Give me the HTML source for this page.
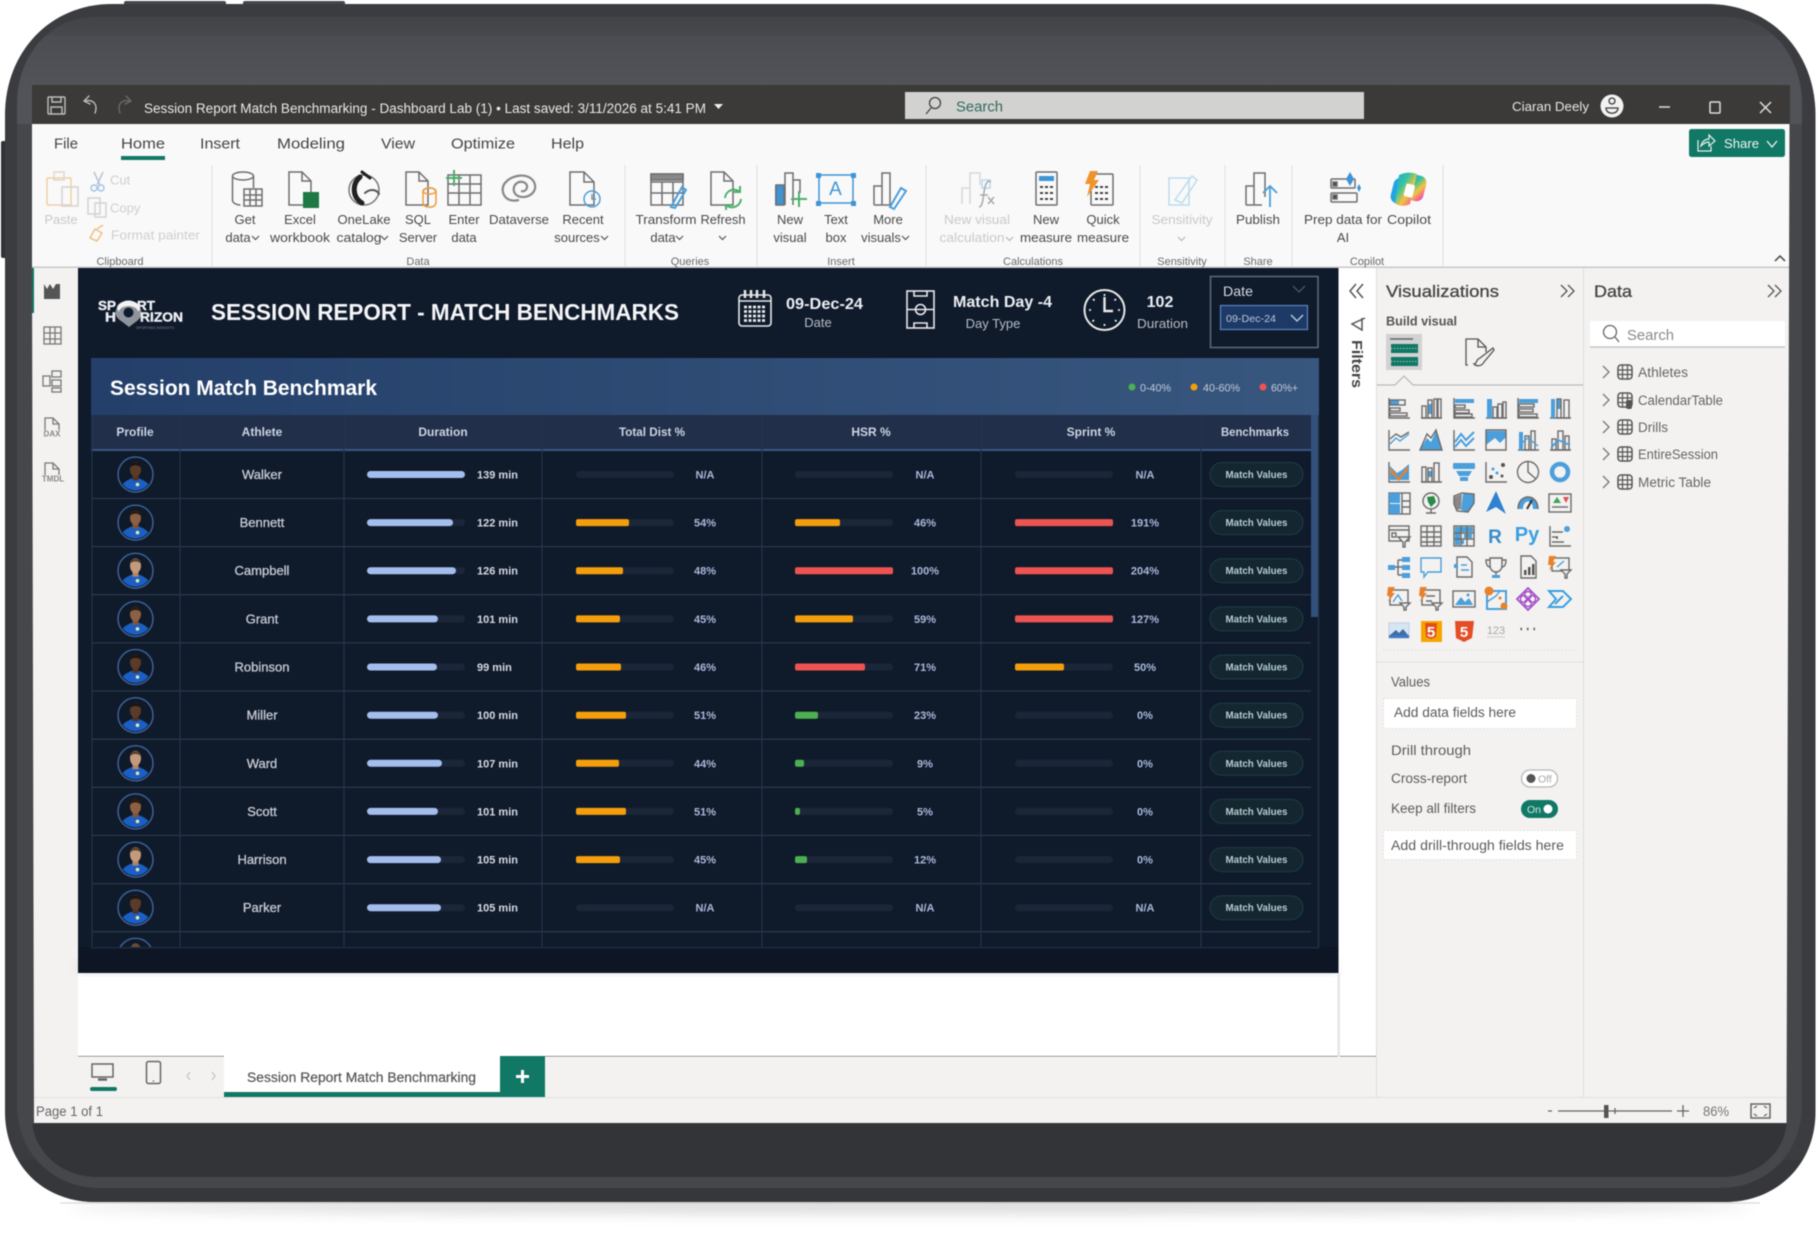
<!DOCTYPE html>
<html lang="en"><head><meta charset="utf-8"><title>Session Report Match Benchmarking</title>
<style>
html,body{margin:0;padding:0;background:#fff;width:1819px;height:1241px;overflow:hidden}
svg{display:block;filter:blur(.55px)}
text{font-family:"Liberation Sans",Arial,sans-serif}
.r{font-size:13px;fill:#4a4a4a;text-anchor:middle}
.d{font-size:13px;fill:#c9c9c9;text-anchor:middle}
.gl{font-size:11px;fill:#6a6a6a;text-anchor:middle}
.m{font-size:15px;fill:#444}
.h{font-size:12px;font-weight:bold;fill:#cdd4e2;text-anchor:middle}
.n{font-size:13px;fill:#c8ccd4;stroke:#c8ccd4;stroke-width:.3;text-anchor:middle}
.v{font-size:11px;font-weight:bold;fill:#d6dbe4}
.p{font-size:11px;font-weight:bold;fill:#aab9da;text-anchor:middle}
.b{font-size:10.5px;font-weight:bold;fill:#b4ced2;text-anchor:middle}
.w{fill:#fff;font-weight:bold}
.s{font-size:13.5px;fill:#5c5c5c}
.i path,.i rect,.i circle,.i ellipse,.i line{stroke:#6b6b6b;stroke-width:1.4;fill:none}
.i .f{fill:#4a9fdc;stroke:none}
.i .bl{stroke:#4a9fdc}
.i .o{fill:#e8812a;stroke:none}
.i .k{fill:#555;stroke:none}
.l path,.l rect,.l circle,.l ellipse{stroke:#6f6f6f;stroke-width:1.5;fill:none}
.l .bs{stroke:#4a9fdc}
.l .gs{stroke:#4caf6a}
.l .os{stroke:#ee9a3e}
.l .fb{fill:#3f94d6;stroke:none}
.l .fg{fill:#1d7a44;stroke:none}
.l .fo{fill:#f0932b;stroke:none}
.c path,.c rect,.c circle,.c ellipse{stroke:#d3d3d3;stroke-width:1.5;fill:none}
.track{fill:#1b2738}
.du{fill:#a3bdec}.or{fill:#f59e0b}.rd{fill:#ef5350}.gr{fill:#4caf50}
</style></head><body>
<svg xmlns="http://www.w3.org/2000/svg" width="1819" height="1241" viewBox="0 0 1819 1241">
<defs>
<linearGradient id="hdr" x1="0" x2="1" y1="0" y2="0"><stop offset="0" stop-color="#24406a"/><stop offset="1" stop-color="#38577f"/></linearGradient>
<linearGradient id="top" x1="0" x2="0" y1="17" y2="85" gradientUnits="userSpaceOnUse"><stop offset="0" stop-color="#434448"/><stop offset=".25" stop-color="#47484c"/><stop offset=".3" stop-color="#4c4d52"/><stop offset="1" stop-color="#525358"/></linearGradient>
<linearGradient id="cop" x1="0" x2="1" y1="0" y2="1"><stop offset="0" stop-color="#1fa5e0"/><stop offset=".35" stop-color="#35c4a0"/><stop offset=".6" stop-color="#f5c43c"/><stop offset=".85" stop-color="#f0609a"/><stop offset="1" stop-color="#b04ad0"/></linearGradient>
<filter id="sh" x="-10%" y="-300%" width="120%" height="700%"><feGaussianBlur stdDeviation="7"/></filter>
<filter id="cs" x="-5%" y="-20%" width="110%" height="140%"><feGaussianBlur stdDeviation="5"/></filter>
<clipPath id="avc"><circle cx="0" cy="0" r="16"/></clipPath>
<clipPath id="tb"><rect x="90" y="415" width="1230" height="532"/></clipPath>
<g id="j"><path d="M-17 18C-15 9-9 6-4 4L4 4C9 6 15 9 17 18Z" fill="#1b5fc4"/><circle cx="2" cy="10" r="1.800" fill="#e7e2b0"/></g>
<g id="rowbase">
<rect class="track" x="367" y="-3.5" width="98" height="7" rx="3.5"/>
<rect class="track" x="576" y="-3.5" width="98" height="7" rx="3.5"/>
<rect class="track" x="795" y="-3.5" width="98" height="7" rx="3.5"/>
<rect class="track" x="1015" y="-3.5" width="98" height="7" rx="3.5"/>
<rect x="1210" y="-12" width="93" height="24" rx="12" fill="#14262f" stroke="#1f3d47"/>
<text class="b" x="1256.5" y="3.5" textLength="62" lengthAdjust="spacingAndGlyphs">Match Values</text>
<path d="M92 24H1311" stroke="#28384e" stroke-width="1.3"/>
<circle cx="135.5" cy="0" r="17.5" fill="#0e1a2a" stroke="#3e6098" stroke-width="1.5"/>
</g>
<g id="av1"><g clip-path="url(#avc)"><use href="#j"/><rect x="-3" y="0" width="6" height="6" fill="#4f3324"/><ellipse cx="0" cy="-5" rx="5.500" ry="7.500" fill="#5b3a28"/><path d="M-5.500-7C-5-14 5-14 5.500-7C3-10-3-10-5.500-7Z" fill="#1c1410"/></g></g>
<g id="av2"><g clip-path="url(#avc)"><use href="#j"/><rect x="-3" y="0" width="6" height="6" fill="#b08468"/><ellipse cx="0" cy="-5" rx="5.500" ry="7.500" fill="#c59a7c"/><path d="M-5.500-7C-5-14 5-14 5.500-7C3-10-3-10-5.500-7Z" fill="#5a4330"/></g></g>
<g id="av3"><g clip-path="url(#avc)"><use href="#j"/><rect x="-3" y="0" width="6" height="6" fill="#7d533a"/><ellipse cx="0" cy="-5" rx="5.500" ry="7.500" fill="#8d6044"/><path d="M-6-6C-6-15 6-15 6-6C3-10-3-10-6-6Z" fill="#2a1d14"/></g></g>
<path id="chv" d="M0 0l3.500 3.500L7 0" fill="none" stroke="#555" stroke-width="1.2"/>
<g id="tbi"><rect x="-7" y="-7" width="14" height="14" rx="3" fill="none" stroke="#555" stroke-width="1.500"/><path d="M-7-2H7M-7 2.500H7M-2.500-7V7M2.500-7V7" stroke="#555" stroke-width="1.200"/></g>
</defs>

<!-- frame -->
<ellipse cx="910" cy="1206" rx="840" ry="6" fill="#777" opacity=".35" filter="url(#sh)"/>
<path d="M60 1203H1760" stroke="#999" stroke-width="1.500" opacity=".3"/>
<rect x="124" y="1" width="102" height="8" rx="2" fill="#46474b"/>
<rect x="243" y="1" width="102" height="8" rx="2" fill="#46474b"/>
<rect x="1" y="141" width="8" height="117" rx="2" fill="#323337"/>
<path id="outer" d="M112 4H1708C1771 4 1815.500 52 1815.500 115V1112C1815.500 1165 1776 1202 1725 1202H95C45 1202 5 1165 5 1112V115C5 52 50 4 112 4Z" fill="#3b3c40"/>
<path d="M95 1202C60 1202 32 1185 18 1160H1802C1788 1185 1760 1202 1725 1202Z" fill="#36373b"/>
<path d="M95 17H1725C1770 17 1802 55 1802 105V1105C1802 1150 1770 1188 1720 1188H100C50 1188 17 1150 17 1105V105C17 55 50 17 95 17Z" fill="#46474b"/>
<path d="M95 17H1725C1770 17 1802 55 1802 105V124H17V105C17 55 50 17 95 17Z" fill="url(#top)"/>
<path d="M32 1100H1787V1118C1787 1150 1760 1177 1722 1177H97C60 1177 32 1150 32 1118Z" fill="#333438"/>
<rect x="32" y="85" width="1758" height="39" fill="#3b3a39"/>

<!-- title bar -->
<g fill="none" stroke="#bdbdbd" stroke-width="1.400">
<rect x="48" y="97" width="17" height="17" rx="1"/><path d="M52 97v5h9v-5M51 114v-7h11v7"/>
<path d="M84 101l5-5M84 101l6 3M85 101c9-2 13 4 10 12" stroke-linecap="round"/>
<path d="M131 101l-5-5M131 101l-6 3M130 101c-9-2-13 4-10 12" stroke="#6a6a6a" stroke-linecap="round"/>
</g>
<text x="144" y="113" font-size="13.500" fill="#e8e8e8" textLength="562" lengthAdjust="spacingAndGlyphs">Session Report Match Benchmarking - Dashboard Lab (1) • Last saved: 3/11/2026 at 5:41 PM</text>
<path d="M714 104h9l-4.500 5z" fill="#eee"/>
<rect x="905" y="92" width="459" height="27" fill="#d2d2d0"/>
<circle cx="935" cy="103" r="5.500" fill="none" stroke="#444" stroke-width="1.300"/><path d="M931 108l-5 6" stroke="#444" stroke-width="1.300"/>
<text x="956" y="111.500" font-size="15" fill="#33695c" textLength="47" lengthAdjust="spacingAndGlyphs">Search</text>
<text x="1512" y="111" font-size="13" fill="#e6e6e6" textLength="77" lengthAdjust="spacingAndGlyphs">Ciaran Deely</text>
<circle cx="1612" cy="106" r="11.500" fill="#f2f2f2"/><circle cx="1612" cy="101" r="3" fill="none" stroke="#3b3a39" stroke-width="1.300"/><path d="M1606 108h12c0 7-12 7-12 0z" fill="none" stroke="#3b3a39" stroke-width="1.300"/>
<path d="M1659 107h11" stroke="#ddd" stroke-width="1.500"/><rect x="1710" y="102" width="10" height="11" rx="1" fill="none" stroke="#ddd" stroke-width="1.500"/><path d="M1760 102l11 11M1771 102l-11 11" stroke="#ddd" stroke-width="1.500"/>

<!-- ribbon -->
<rect x="32" y="124" width="1758" height="144" fill="#f9f9f9"/>
<rect x="32" y="266.500" width="1758" height="2" fill="#c8c8c8"/>
<text class="m" x="54" y="148.500" textLength="24" lengthAdjust="spacingAndGlyphs">File</text>
<text class="m" x="121" y="148.500" textLength="44" lengthAdjust="spacingAndGlyphs">Home</text>
<text class="m" x="200" y="148.500" textLength="40" lengthAdjust="spacingAndGlyphs">Insert</text>
<text class="m" x="277" y="148.500" textLength="68" lengthAdjust="spacingAndGlyphs">Modeling</text>
<text class="m" x="381" y="148.500" textLength="34" lengthAdjust="spacingAndGlyphs">View</text>
<text class="m" x="451" y="148.500" textLength="64" lengthAdjust="spacingAndGlyphs">Optimize</text>
<text class="m" x="551" y="148.500" textLength="33" lengthAdjust="spacingAndGlyphs">Help</text>
<rect x="121" y="156" width="44" height="4" fill="#117865"/>
<rect x="1689" y="129" width="96" height="28" rx="2.500" fill="#117865"/>
<path d="M1698 140v11h13v-5M1701 146c1-5 5-7 8-7v-4l6 6-6 5v-4c-3 0-5 1-8 4z" fill="none" stroke="#e8f2ef" stroke-width="1.200"/>
<text x="1724" y="148" font-size="13" fill="#eef6f3" textLength="35" lengthAdjust="spacingAndGlyphs">Share</text>
<path d="M1767 141l5 6 5-6" fill="none" stroke="#eef6f3" stroke-width="1.300"/>
<g stroke="#e2e2e2" stroke-width="1.200"><path d="M212 165V266M625 165V266M757 165V266M926 165V266M1140 165V266M1225 165V266M1292 165V266M1443 165V266"/></g>
<text class="gl" x="120" y="265">Clipboard</text><text class="gl" x="418" y="265">Data</text><text class="gl" x="690" y="265">Queries</text><text class="gl" x="841" y="265">Insert</text><text class="gl" x="1033" y="265">Calculations</text><text class="gl" x="1182" y="265">Sensitivity</text><text class="gl" x="1258" y="265">Share</text><text class="gl" x="1367" y="265">Copilot</text>
<path d="M1775 261l5-5 5 5" fill="none" stroke="#444" stroke-width="1.500"/>

<text class="d" x="61" y="224">Paste</text>
<text x="110" y="184.500" font-size="13" fill="#cfcfcf">Cut</text>
<text x="110" y="212.500" font-size="13" fill="#cfcfcf">Copy</text>
<text x="111" y="239.500" font-size="13" fill="#cfcfcf" textLength="89" lengthAdjust="spacingAndGlyphs">Format painter</text>
<g class="c">
<rect x="47" y="178" width="24" height="27" rx="1" style="stroke:#f0d0a8"/><rect x="54" y="172" width="10" height="8" style="stroke:#e0d8cc"/><rect x="62" y="187" width="16" height="19" fill="#fff"/>
<path d="M94 172l6 13M103 172l-6 13" style="stroke:#b8c4d8"/><circle cx="94" cy="188" r="3" style="stroke:#a5c4e6"/><circle cx="101" cy="188" r="3" style="stroke:#a5c4e6"/>
<rect x="88" y="198" width="12" height="16"/><rect x="95" y="203" width="11" height="14"/>
<path d="M90 238l5-9 7 4-5 8zM97 229l6-4" style="stroke:#f0c088"/>
</g>

<g class="l">
<!-- get data -->
<ellipse cx="243" cy="176" rx="10.500" ry="4"/><path d="M232.500 176V200c0 3 4 5 8 5M253.500 176V188"/><rect x="244" y="189" width="18" height="17" fill="#f9f9f9"/><path d="M244 195h18M244 200h18M250 189v17M256 189v17"/>
<!-- excel -->
<path d="M289 172H302L311 181V205H289ZM302 172V181H311"/><rect class="fg" x="303" y="192" width="16" height="16"/>
<!-- sql -->
<path d="M406 172H419L428 181V205H406ZM419 172V181H428"/><rect class="os" x="423" y="188" width="13" height="19" rx="5" fill="#f9f9f9"/><ellipse class="os" cx="429.500" cy="191" rx="6.500" ry="3"/>
<!-- enter -->
<path d="M448 175H481V205H448ZM448 184H481M448 193H481M459 175V205M470 175V205"/><path class="gs" d="M454 170V186M446 178H462" style="stroke-width:2"/>
<!-- dataverse -->
<path d="M519 200C503 204 499 188 506 182C512 175 528 172 534 182C539 192 527 200 518 196C510 192 514 180 523 182C530 184 527 193 521 191" style="stroke-width:2.200;stroke:#888"/>
<!-- recent -->
<path d="M570 172H584L594 182V205H570ZM584 172V182H594"/><circle class="bs" cx="592" cy="199" r="8" fill="#f9f9f9"/><path class="bs" d="M592 194V199H596"/>
<!-- transform -->
<path d="M651 174H683V205H651ZM651 182H683M651 193H683M662 182V205M673 182V205"/><path d="M651 174H683V180H651Z" style="fill:#888"/><path class="bs" d="M671 207L682 187L686 190L675 208Z" fill="#f9f9f9" style="stroke-width:2"/>
<!-- refresh -->
<path d="M711 172H724L733 181V205H711ZM724 172V181H733"/><path class="gs" d="M725 198a9 9 0 0 1 15-6M741 199a9 9 0 0 1-15 6M740 186v6h-6M726 210v-5h6" style="stroke-width:2" fill="none"/>
<!-- new visual -->
<rect class="fb" x="775" y="185" width="9" height="20"/><rect x="776" y="185" width="8" height="20"/><path d="M785 205V173H793V205M793 180H800V193"/><path class="gs" d="M799 191V207M791 199H807" style="stroke-width:2"/>
<!-- text box -->
<rect x="819" y="175" width="34" height="28" style="stroke:#3f94d6"/><rect class="fb" x="816" y="173" width="5" height="5"/><rect class="fb" x="851" y="173" width="5" height="5"/><rect class="fb" x="816" y="201" width="5" height="5"/><rect class="fb" x="851" y="201" width="5" height="5"/>
<!-- more visuals -->
<path d="M874 205V186H882V205M882 205V173H890V205H874"/><path class="bs" d="M890 207L901 188L906 191L894 209Z" style="stroke-width:2"/>
<!-- measure -->
<rect x="1036" y="172" width="21" height="33" rx="1"/><rect class="fb" x="1039" y="176" width="15" height="5"/><path d="M1040 187h3M1045 187h3M1050 187h3M1040 193h3M1045 193h3M1050 193h3M1040 199h3M1045 199h3M1050 199h3" style="stroke-width:2;stroke:#444"/>
<!-- quick measure -->
<rect x="1091" y="174" width="22" height="31" rx="1"/><path d="M1095 187h3M1100 187h3M1105 187h3M1095 193h3M1100 193h3M1105 193h3M1095 199h3M1100 199h3M1105 199h3" style="stroke-width:2;stroke:#444"/><path class="fo" d="M1090 171H1098L1094 180H1099L1087 197L1090 184H1085Z"/>
<!-- publish -->
<path d="M1246 205V186H1254V205M1254 205V173H1265V197M1246 205H1262"/><path class="bs" d="M1270 207V186M1263 193L1270 186L1277 193" style="stroke-width:1.800"/>
<!-- prep -->
<rect x="1331" y="179" width="24" height="9" rx="1"/><rect x="1331" y="193" width="26" height="9" rx="1"/><rect x="1333" y="182" width="4" height="4" style="fill:#444"/><rect x="1333" y="195" width="4" height="4" style="fill:#444"/><path class="fb" d="M1350 172L1354 179L1350 186L1346 179Z"/><path class="fb" d="M1359 184L1361 188L1359 192L1357 188Z"/>
</g>
<!-- onelake -->
<g fill="none" stroke-linecap="round">
<circle cx="364" cy="190" r="15" stroke="#777" stroke-width="1.500"/>
<path d="M360 177C352 184 352 197 362 203" stroke="#222" stroke-width="5"/>
<path d="M362 172L370 178" stroke="#222" stroke-width="3"/>
<path d="M365 193C371 188 377 190 379 194" stroke="#555" stroke-width="2"/>
</g>
<text x="835.500" y="195" font-size="19" fill="#3f94d6" text-anchor="middle">A</text>
<!-- calc light -->
<g class="c"><path d="M962 204V188H970V204M970 204V173H980V185" style="stroke:#d8d8d8"/><rect x="982" y="180" width="8" height="8" style="stroke:#b9d8ee"/><path d="M979 207C984 207 983 190 986 184C988 180 990 181 991 182M980 195H988M988 197l6 7M994 197l-6 7" style="stroke:#aaa"/></g>
<g fill="none" stroke="#bcdcf0" stroke-width="1.500"><path d="M1169 178H1189V205H1169Z"/><path d="M1175 200L1192 176L1197 180L1182 203Z"/></g>
<rect x="1392" y="178" width="17" height="26" rx="7" fill="#22a5e5" transform="rotate(14 1400 191)"/>
<rect x="1408" y="175" width="17" height="26" rx="7" fill="url(#cop)" transform="rotate(14 1416 188)"/>
<path d="M1399 175C1405 172 1411 172 1417 174L1410 204C1404 207 1398 206 1395 203Z" fill="url(#cop)"/>
<rect x="1405" y="184" width="9" height="13" rx="2" fill="#fff" transform="rotate(14 1409 190)"/>

<text class="r" x="245" y="224">Get</text><text class="r" x="238" y="242">data</text><use href="#chv" x="252" y="236"/>
<text class="r" x="300" y="224">Excel</text><text class="r" x="300" y="242" textLength="60" lengthAdjust="spacingAndGlyphs">workbook</text>
<text class="r" x="364" y="224" textLength="53" lengthAdjust="spacingAndGlyphs">OneLake</text><text class="r" x="359" y="242" textLength="45" lengthAdjust="spacingAndGlyphs">catalog</text><use href="#chv" x="381" y="236"/>
<text class="r" x="418" y="224">SQL</text><text class="r" x="418" y="242">Server</text>
<text class="r" x="464" y="224">Enter</text><text class="r" x="464" y="242">data</text>
<text class="r" x="519" y="224" textLength="60" lengthAdjust="spacingAndGlyphs">Dataverse</text>
<text class="r" x="583" y="224">Recent</text><text class="r" x="577" y="242">sources</text><use href="#chv" x="601" y="236"/>
<text class="r" x="666" y="224" textLength="61" lengthAdjust="spacingAndGlyphs">Transform</text><text class="r" x="663" y="242">data</text><use href="#chv" x="676" y="236"/>
<text class="r" x="723" y="224" textLength="45" lengthAdjust="spacingAndGlyphs">Refresh</text><use href="#chv" x="719" y="236"/>
<text class="r" x="790" y="224">New</text><text class="r" x="790" y="242">visual</text>
<text class="r" x="836" y="224">Text</text><text class="r" x="836" y="242">box</text>
<text class="r" x="888" y="224">More</text><text class="r" x="881" y="242">visuals</text><use href="#chv" x="902" y="236"/>
<text class="d" x="977" y="224" textLength="66" lengthAdjust="spacingAndGlyphs">New visual</text><text class="d" x="972" y="242" textLength="65" lengthAdjust="spacingAndGlyphs">calculation</text><use href="#chv" x="1006" y="237" opacity=".4"/>
<text class="r" x="1046" y="224">New</text><text class="r" x="1046" y="242" textLength="52" lengthAdjust="spacingAndGlyphs">measure</text>
<text class="r" x="1103" y="224">Quick</text><text class="r" x="1103" y="242" textLength="52" lengthAdjust="spacingAndGlyphs">measure</text>
<text class="d" x="1182" y="224" textLength="61" lengthAdjust="spacingAndGlyphs">Sensitivity</text><use href="#chv" x="1178" y="237" opacity=".4"/>
<text class="r" x="1258" y="224" textLength="44" lengthAdjust="spacingAndGlyphs">Publish</text>
<text class="r" x="1343" y="224" textLength="78" lengthAdjust="spacingAndGlyphs">Prep data for</text><text class="r" x="1343" y="242">AI</text>
<text class="r" x="1409" y="224" textLength="44" lengthAdjust="spacingAndGlyphs">Copilot</text>

<!-- left nav -->
<rect x="32" y="268" width="46" height="854" fill="#f3f2f1"/>
<rect x="32" y="268" width="2" height="45" fill="#117865"/>
<path d="M44 299V284L47 289L50 284L53 289L56 284L60 284V299Z" fill="#555"/>
<g fill="none" stroke="#777" stroke-width="1.300"><rect x="44" y="327" width="17" height="17"/><path d="M44 333h17M44 339h17M50 327v17M55 327v17"/>
<rect x="52" y="371" width="9" height="6"/><rect x="52" y="380" width="9" height="6"/><rect x="52" y="388" width="9" height="4"/><rect x="43" y="376" width="7" height="10"/>
<path d="M45 430V418h8l6 6v6M53 418v6h6"/><path d="M45 475V463h8l6 6v6M53 463v6h6"/></g>
<text x="52" y="436.500" font-size="8" font-weight="bold" fill="#888" text-anchor="middle">DAX</text><text x="53" y="481.500" font-size="8" font-weight="bold" fill="#888" text-anchor="middle">TMDL</text>

<!-- canvas -->
<rect x="78" y="268" width="1298" height="788" fill="#fff"/>
<rect x="78" y="960" width="1258" height="14" fill="#999" opacity=".22" filter="url(#cs)"/>
<rect x="78" y="268" width="1260.500" height="705" fill="#0f1a2b"/>
<rect x="78" y="947" width="1260.500" height="26" fill="#0e1625"/>
<rect x="1337.500" y="973" width="2.500" height="83.500" fill="#e6e6e6"/>
<!-- logo -->
<path d="M115.500 313a13 12 0 0 1 26 0c0 4-3 7-6 9l-6.500 5-6.500-5c-3-2-7-5-7-9z" fill="#8f949c"/>
<path d="M117 310a11.500 9.500 0 0 1 23 0a11.500 4 0 0 0-23 0z" fill="#f2f2f2"/>
<path d="M117 308a11.500 7 0 0 1 23 0l-2 4a9.500 6 0 0 0-19 0z" fill="#f2f2f2"/>
<circle cx="128.500" cy="312.500" r="5" fill="#0f1a2b"/>
<text x="98" y="310" font-size="13" font-weight="bold" fill="#eceef2" stroke="#eceef2" stroke-width=".4" textLength="18" lengthAdjust="spacingAndGlyphs">SP</text>
<text x="137" y="310" font-size="13" font-weight="bold" fill="#eceef2" stroke="#eceef2" stroke-width=".4" textLength="18" lengthAdjust="spacingAndGlyphs">RT</text>
<text x="105" y="321.500" font-size="13" font-weight="bold" fill="#eceef2" stroke="#eceef2" stroke-width=".4" textLength="11" lengthAdjust="spacingAndGlyphs">H</text>
<text x="140" y="321.500" font-size="13" font-weight="bold" fill="#eceef2" stroke="#eceef2" stroke-width=".4" textLength="43" lengthAdjust="spacingAndGlyphs">RIZON</text>
<text x="136" y="329" font-size="4" fill="#7c8290" textLength="38" lengthAdjust="spacingAndGlyphs">SPORTING INSIGHTS</text>
<text x="211" y="320" font-size="23" font-weight="bold" fill="#f4f5f7" textLength="468" lengthAdjust="spacingAndGlyphs">SESSION REPORT - MATCH BENCHMARKS</text>
<!-- kpis -->
<g fill="none" stroke="#e8e8e8" stroke-width="1.600">
<rect x="739" y="295" width="32" height="31" rx="3"/><path d="M739 301H771"/><path d="M745 290v8M751 290v8M757 290v8M764 290v8" stroke-width="2.500"/>
<path d="M744 307h22M744 311.500h22M744 316h22M744 320.500h22" stroke-width="2.800" stroke-dasharray="3 1.500"/>
<rect x="907" y="291" width="27" height="37"/><path d="M907 309.500h27M914 291v5h13v-5M914 328v-5h13v5"/><circle cx="920.500" cy="309.500" r="5"/>
<circle cx="1104.500" cy="310" r="20" stroke-width="2"/><path d="M1104.500 297V311H1113" stroke-width="2.400"/>
<path d="M1104.500 294v2M1104.500 324v2M1089 310h2M1118 310h2M1093 299l1.500 1.500M1115 320l1.500 1.500M1116 299l-1.500 1.500M1094 320l-1.500 1.500" stroke-width="1.800"/>
</g>
<text x="786" y="309" font-size="16" class="w" textLength="77" lengthAdjust="spacingAndGlyphs" style="fill:#eceef2">09-Dec-24</text>
<text x="818" y="327" font-size="13" fill="#b9bec7" text-anchor="middle">Date</text>
<text x="953" y="307" font-size="16" class="w" textLength="99" lengthAdjust="spacingAndGlyphs" style="fill:#eceef2">Match Day -4</text>
<text x="993" y="328" font-size="13" fill="#b9bec7" text-anchor="middle">Day Type</text>
<text x="1160" y="307" font-size="16" class="w" text-anchor="middle" style="fill:#eceef2">102</text>
<text x="1137" y="328" font-size="13" fill="#b9bec7" textLength="51" lengthAdjust="spacingAndGlyphs">Duration</text>
<rect x="1210.500" y="276.500" width="107.500" height="71" fill="none" stroke="#5f6b7c" stroke-width="1.500"/>
<text x="1223" y="296" font-size="14" fill="#d5d8de" textLength="30" lengthAdjust="spacingAndGlyphs">Date</text>
<path d="M1293 286l6 6 6-6" fill="none" stroke="#4a5566" stroke-width="1.300"/>
<rect x="1220.500" y="305.500" width="87" height="24" fill="#1d3a66" stroke="#5b84c0" stroke-width="1.200"/>
<text x="1226" y="322" font-size="10.500" fill="#bcc6d6" textLength="50" lengthAdjust="spacingAndGlyphs">09-Dec-24</text>
<path d="M1291 315l6 6 6-6" fill="none" stroke="#c9d3e3" stroke-width="1.300"/>

<!-- table -->
<rect x="91" y="358" width="1228" height="57" fill="url(#hdr)"/>
<text x="110" y="395" font-size="21" class="w" textLength="267" lengthAdjust="spacingAndGlyphs">Session Match Benchmark</text>
<circle cx="1132" cy="387" r="3.500" fill="#4caf50"/><text x="1140" y="391.500" font-size="11" fill="#c1cad8" textLength="31" lengthAdjust="spacingAndGlyphs">0-40%</text>
<circle cx="1194" cy="387" r="3.500" fill="#f59e0b"/><text x="1203" y="391.500" font-size="11" fill="#c1cad8" textLength="37" lengthAdjust="spacingAndGlyphs">40-60%</text>
<circle cx="1263" cy="387" r="3.500" fill="#ef5350"/><text x="1271" y="391.500" font-size="11" fill="#c1cad8" textLength="27" lengthAdjust="spacingAndGlyphs">60%+</text>
<rect x="91" y="415" width="1220" height="35" fill="#222f4a"/>
<rect x="91" y="449" width="1220" height="2" fill="#3a5786"/>
<text class="h" x="135" y="436">Profile</text><text class="h" x="262" y="436">Athlete</text><text class="h" x="443" y="436">Duration</text><text class="h" x="652" y="436" textLength="66" lengthAdjust="spacingAndGlyphs">Total Dist %</text><text class="h" x="871" y="436">HSR %</text><text class="h" x="1091" y="436">Sprint %</text><text class="h" x="1255" y="436" textLength="68" lengthAdjust="spacingAndGlyphs">Benchmarks</text>

<g clip-path="url(#tb)">
<g transform="translate(0,474.500)"><use href="#rowbase"/><use href="#av1" x="135.500"/><text class="n" x="262" y="4.500">Walker</text><rect class="du" x="367" y="-3.500" width="98" height="7" rx="3.500"/><text class="v" x="477" y="4">139 min</text><text class="p" x="705" y="4">N/A</text><text class="p" x="925" y="4">N/A</text><text class="p" x="1145" y="4">N/A</text></g>
<g transform="translate(0,522.600)"><use href="#rowbase"/><use href="#av3" x="135.500"/><text class="n" x="262" y="4.500">Bennett</text><rect class="du" x="367" y="-3.500" width="86" height="7" rx="3.500"/><text class="v" x="477" y="4">122 min</text><rect class="or" x="576" y="-3.500" width="53" height="7" rx="2"/><text class="p" x="705" y="4">54%</text><rect class="or" x="795" y="-3.500" width="45" height="7" rx="2"/><text class="p" x="925" y="4">46%</text><rect class="rd" x="1015" y="-3.500" width="98" height="7" rx="2"/><text class="p" x="1145" y="4">191%</text></g>
<g transform="translate(0,570.700)"><use href="#rowbase"/><use href="#av2" x="135.500"/><text class="n" x="262" y="4.500">Campbell</text><rect class="du" x="367" y="-3.500" width="89" height="7" rx="3.500"/><text class="v" x="477" y="4">126 min</text><rect class="or" x="576" y="-3.500" width="47" height="7" rx="2"/><text class="p" x="705" y="4">48%</text><rect class="rd" x="795" y="-3.500" width="98" height="7" rx="2"/><text class="p" x="925" y="4">100%</text><rect class="rd" x="1015" y="-3.500" width="98" height="7" rx="2"/><text class="p" x="1145" y="4">204%</text></g>
<g transform="translate(0,618.900)"><use href="#rowbase"/><use href="#av3" x="135.500"/><text class="n" x="262" y="4.500">Grant</text><rect class="du" x="367" y="-3.500" width="71" height="7" rx="3.500"/><text class="v" x="477" y="4">101 min</text><rect class="or" x="576" y="-3.500" width="44" height="7" rx="2"/><text class="p" x="705" y="4">45%</text><rect class="or" x="795" y="-3.500" width="58" height="7" rx="2"/><text class="p" x="925" y="4">59%</text><rect class="rd" x="1015" y="-3.500" width="98" height="7" rx="2"/><text class="p" x="1145" y="4">127%</text></g>
<g transform="translate(0,667)"><use href="#rowbase"/><use href="#av1" x="135.500"/><text class="n" x="262" y="4.500">Robinson</text><rect class="du" x="367" y="-3.500" width="70" height="7" rx="3.500"/><text class="v" x="477" y="4">99 min</text><rect class="or" x="576" y="-3.500" width="45" height="7" rx="2"/><text class="p" x="705" y="4">46%</text><rect class="rd" x="795" y="-3.500" width="70" height="7" rx="2"/><text class="p" x="925" y="4">71%</text><rect class="or" x="1015" y="-3.500" width="49" height="7" rx="2"/><text class="p" x="1145" y="4">50%</text></g>
<g transform="translate(0,715.200)"><use href="#rowbase"/><use href="#av1" x="135.500"/><text class="n" x="262" y="4.500">Miller</text><rect class="du" x="367" y="-3.500" width="71" height="7" rx="3.500"/><text class="v" x="477" y="4">100 min</text><rect class="or" x="576" y="-3.500" width="50" height="7" rx="2"/><text class="p" x="705" y="4">51%</text><rect class="gr" x="795" y="-3.500" width="23" height="7" rx="2"/><text class="p" x="925" y="4">23%</text><text class="p" x="1145" y="4">0%</text></g>
<g transform="translate(0,763.300)"><use href="#rowbase"/><use href="#av2" x="135.500"/><text class="n" x="262" y="4.500">Ward</text><rect class="du" x="367" y="-3.500" width="75" height="7" rx="3.500"/><text class="v" x="477" y="4">107 min</text><rect class="or" x="576" y="-3.500" width="43" height="7" rx="2"/><text class="p" x="705" y="4">44%</text><rect class="gr" x="795" y="-3.500" width="9" height="7" rx="2"/><text class="p" x="925" y="4">9%</text><text class="p" x="1145" y="4">0%</text></g>
<g transform="translate(0,811.400)"><use href="#rowbase"/><use href="#av3" x="135.500"/><text class="n" x="262" y="4.500">Scott</text><rect class="du" x="367" y="-3.500" width="71" height="7" rx="3.500"/><text class="v" x="477" y="4">101 min</text><rect class="or" x="576" y="-3.500" width="50" height="7" rx="2"/><text class="p" x="705" y="4">51%</text><rect class="gr" x="795" y="-3.500" width="5" height="7" rx="2"/><text class="p" x="925" y="4">5%</text><text class="p" x="1145" y="4">0%</text></g>
<g transform="translate(0,859.600)"><use href="#rowbase"/><use href="#av2" x="135.500"/><text class="n" x="262" y="4.500">Harrison</text><rect class="du" x="367" y="-3.500" width="74" height="7" rx="3.500"/><text class="v" x="477" y="4">105 min</text><rect class="or" x="576" y="-3.500" width="44" height="7" rx="2"/><text class="p" x="705" y="4">45%</text><rect class="gr" x="795" y="-3.500" width="12" height="7" rx="2"/><text class="p" x="925" y="4">12%</text><text class="p" x="1145" y="4">0%</text></g>
<g transform="translate(0,907.700)"><use href="#rowbase"/><use href="#av1" x="135.500"/><text class="n" x="262" y="4.500">Parker</text><rect class="du" x="367" y="-3.500" width="74" height="7" rx="3.500"/><text class="v" x="477" y="4">105 min</text><text class="p" x="705" y="4">N/A</text><text class="p" x="925" y="4">N/A</text><text class="p" x="1145" y="4">N/A</text></g>
<g transform="translate(0,955.800)"><circle cx="135.500" cy="0" r="17.500" fill="#0e1a2a" stroke="#3e6098" stroke-width="1.500"/><ellipse cx="135.500" cy="-5" rx="5.500" ry="7.500" fill="#6b4a36"/></g>
</g>
<rect x="91" y="947" width="1228" height="1.500" fill="#1d2a3e"/>
<g stroke="#243349" stroke-width="1.300"><path d="M92 415V947M180 415V947M344 415V947M542 415V947M762 415V947M981 415V947M1201 415V947"/></g>
<path d="M1318.500 415V947" stroke="#243349" stroke-width="1.300"/>
<rect x="1311" y="415" width="7" height="202" fill="#33507a"/>

<!-- filters pane -->
<path d="M1356 284l-6 7 6 7M1363 284l-6 7 6 7" fill="none" stroke="#555" stroke-width="1.500"/>
<path d="M1365 318L1352 324L1362 330V318" fill="none" stroke="#555" stroke-width="1.500"/>
<text transform="translate(1352,340) rotate(90)" font-size="15" font-weight="bold" fill="#444" textLength="48" lengthAdjust="spacingAndGlyphs">Filters</text>

<!-- viz & data panes -->
<rect x="1376" y="268" width="414" height="854" fill="#f3f2f1"/>
<path d="M1376.500 268V1097M1583.500 268V1097" stroke="#e0dedc" stroke-width="1"/>
<text x="1386" y="297" font-size="17" fill="#444" textLength="113" lengthAdjust="spacingAndGlyphs" style="stroke:#444;stroke-width:.3">Visualizations</text>
<path d="M1561 285l6 6-6 6M1568 285l6 6-6 6M1768 285l6 6-6 6M1775 285l6 6-6 6" fill="none" stroke="#555" stroke-width="1.300"/>
<text x="1594" y="297" font-size="17" fill="#444" style="stroke:#444;stroke-width:.3" textLength="38" lengthAdjust="spacingAndGlyphs">Data</text>
<text x="1386" y="325.500" font-size="12.500" font-weight="bold" fill="#555" textLength="71" lengthAdjust="spacingAndGlyphs">Build visual</text>
<rect x="1386" y="334" width="36" height="36" fill="#d2d2d2"/>
<path d="M1390 339h23" stroke="#666" stroke-width="1.500"/>
<rect x="1391" y="344" width="27" height="9" fill="#117865"/><rect x="1391" y="357" width="27" height="9" fill="#117865"/>
<path d="M1391 348.500h27M1391 361.500h27" stroke="#d2d2d2" stroke-width=".7" stroke-dasharray="1.500 1.500"/>
<path d="M1468 365H1466V339H1478L1486 347V352M1478 339V347H1486M1474 364C1477 364 1476 359 1480 358L1493 348L1494 350L1484 362C1482 366 1477 367 1474 364Z" fill="none" stroke="#555" stroke-width="1.300"/>
<path d="M1377 385H1395L1404 376L1413 385H1583" fill="none" stroke="#bbb" stroke-width="1.300"/>

<!-- viz grid -->
<g class="i">
<g transform="translate(1399,408)"><path d="M-10-10V10H11"/><rect class="f" x="-9" y="-8" width="9" height="5"/><rect x="-9" y="-8" width="15" height="5"/><rect x="-9" y="0" width="10" height="3"/><rect x="-9" y="5" width="17" height="3"/></g>
<g transform="translate(1431,408)"><path d="M-10 10H11"/><rect x="-9" y="-2" width="4" height="12"/><rect class="f" x="-3" y="-4" width="4" height="10"/><rect x="-3" y="-8" width="4" height="18"/><rect x="3" y="-9" width="3" height="19"/><rect x="7" y="-9" width="3" height="19"/></g>
<g transform="translate(1464,408)"><path d="M-10-10V10H11"/><rect class="f" x="-9" y="-9" width="19" height="4"/><rect x="-9" y="-3" width="10" height="3"/><rect x="-9" y="2" width="14" height="3"/><rect x="-9" y="6" width="17" height="3"/></g>
<g transform="translate(1496,408)"><path d="M-10 10H11"/><rect class="f" x="-9" y="-9" width="5" height="19"/><rect x="-3" y="-1" width="4" height="11"/><rect x="2" y="-4" width="4" height="14"/><rect x="7" y="-6" width="3" height="16"/></g>
<g transform="translate(1528,408)"><path d="M-10-10V10H11"/><rect class="f" x="-9" y="-9" width="19" height="4"/><rect x="-9" y="-4" width="15" height="3"/><rect x="-9" y="1" width="14" height="3"/><rect x="-9" y="6" width="18" height="3"/></g>
<g transform="translate(1560,408)"><path d="M-10 10H11"/><rect class="f" x="-9" y="-9" width="4" height="19"/><rect class="f" x="-3" y="-9" width="4" height="10"/><rect x="-3" y="-9" width="4" height="19"/><rect x="4" y="-8" width="5" height="18"/></g>

<g transform="translate(1399,440)"><path d="M-10-10V10H11"/><path class="bl" d="M-9 4L-3-2L1 1L10-6"/><path d="M-9-1L-3-6L2-3L10-8"/></g>
<g transform="translate(1431,440)"><path class="f" d="M-11 10L-4-2L0 2L5-9L11 10Z"/><path d="M-11 10L-4-6L0-2L5-10L11 10Z"/></g>
<g transform="translate(1464,440)"><path d="M-10-10V10H11"/><path class="bl" d="M-9 2L-3-6L2 0L10-8" style="stroke-width:2"/><path class="bl" d="M-9 7L-3 0L2 6L10-2" style="stroke-width:2"/></g>
<g transform="translate(1496,440)"><path class="f" d="M-10-9H10V-3L4 3L-1-2L-10 5Z"/><path d="M-10-10V10H10V-10Z"/></g>
<g transform="translate(1528,440)"><path d="M-10 10H11"/><rect class="f" x="-9" y="-8" width="4" height="18"/><rect x="-3" y="-4" width="4" height="14"/><rect x="3" y="-9" width="4" height="19"/><path class="bl" d="M-9 5L0-2L10 6"/></g>
<g transform="translate(1560,440)"><path d="M-10 10H11"/><rect x="-8" y="-1" width="4" height="11"/><rect x="-2" y="-9" width="5" height="19"/><rect x="5" y="-4" width="4" height="14"/><path class="bl" d="M-9 8L-2 0L10 5" style="stroke-width:1.800"/></g>

<g transform="translate(1399,472)"><path d="M-10-10V10H11"/><path class="f" d="M-9-6L-2 1L3-2L10-8V8H-9Z"/><path class="o" d="M-8-4L0 6L8-6L9-2L0 9L-9 0Z"/></g>
<g transform="translate(1431,472)"><path d="M-10 10H11"/><rect x="-9" y="-5" width="4" height="15"/><rect class="f" x="-3" y="-1" width="4" height="6"/><rect x="-3" y="-4" width="4" height="14"/><rect x="3" y="-9" width="5" height="19"/></g>
<g transform="translate(1464,472)"><rect class="f" x="-11" y="-9" width="22" height="6" rx="1"/><path class="f" d="M-8-1H8L5 4H-5Z"/><rect class="f" x="-4" y="5" width="8" height="4"/></g>
<g transform="translate(1496,472)"><path d="M-10-10V10H11"/><circle class="f" cx="-3" cy="-3" r="1.500"/><circle class="f" cx="1" cy="1" r="1.500"/><circle class="k" cx="7" cy="-7" r="2"/><circle class="k" cx="-5" cy="5" r="2"/><circle class="k" cx="6" cy="4" r="1.500"/></g>
<g transform="translate(1528,472)"><circle cx="0" cy="0" r="10.500"/><path d="M0-10V0L8 7"/></g>
<g transform="translate(1560,472)"><circle cx="0" cy="0" r="8" style="stroke:#4a9fdc;stroke-width:4.500"/></g>

<g transform="translate(1399,503)"><rect x="-10" y="-10" width="21" height="21"/><rect class="f" x="-10" y="-10" width="11" height="10"/><rect class="f" x="-10" y="1" width="11" height="10"/><path d="M3-10V11M3-2H11M3 4H11"/></g>
<g transform="translate(1431,503)"><circle cx="0" cy="-2" r="8"/><path d="M-5 10H5M0 6V10"/><path class="f" d="M-4-6L3-7L5-1L0 4L-3-1Z" style="fill:#2a8a4a"/></g>
<g transform="translate(1464,503)"><path class="f" d="M-1-9L10-9V0L4 9L-3 7L-1-9Z"/><path class="k" style="fill:#888" d="M-10-6L-2-9L-3 6L-7 7L-10 1Z"/><path d="M-10-7L-2-10L10-9V0L4 9L-7 8L-10 1Z"/></g>
<g transform="translate(1496,503)"><path class="f" d="M0-12L10 11L0 4L-10 9Z" style="fill:#2f82cf"/></g>
<g transform="translate(1528,503)"><path d="M-10 6C-10-10 10-10 10 6H5C5-4-5-4-5 6Z" class="f"/><path d="M-10 6C-10-10 10-10 10 6"/><path d="M-1 6L4-3" style="stroke:#333;stroke-width:2"/></g>
<g transform="translate(1560,503)"><rect x="-11" y="-9" width="22" height="18"/><path d="M-7 0L-3-6L1 0Z" fill="#3aa655" style="stroke:none;fill:#3aa655"/><path d="M3-6H9L6 0Z" style="stroke:none;fill:#d9534f"/><path d="M-8 4H8"/></g>

<g transform="translate(1399,536)"><rect x="-10" y="-10" width="20" height="15"/><path d="M-10-6H10"/><rect x="-7" y="-3" width="4" height="4"/><path d="M-1 1H11L6 6V11H4V6Z" style="fill:#f3f2f1"/></g>
<g transform="translate(1431,536)"><rect x="-10" y="-10" width="20" height="20"/><path d="M-10-4H10M-10 1H10M-10 6H10M-4-10V10M3-10V10"/></g>
<g transform="translate(1464,536)"><rect x="-10" y="-10" width="20" height="20"/><rect class="f" x="-9" y="-9" width="5" height="18"/><rect class="f" x="-9" y="-9" width="18" height="5"/><rect class="f" x="0" y="-2" width="8" height="4"/><rect class="f" x="-3" y="4" width="3" height="4"/><path d="M-10-3H10M-10 3H10M-3-10V10M3-10V10"/></g>
<text x="1495" y="543" font-size="19" font-weight="bold" fill="#3a8ccb" text-anchor="middle">R</text>
<text x="1527" y="541" font-size="20" font-weight="bold" fill="#3a9fe0" text-anchor="middle">Py</text>
<g transform="translate(1560,536)"><path d="M-10-10V10H11"/><path d="M-8-4H3M-8 1H-2M-8 6H4"/><circle class="f" cx="7" cy="-7" r="3"/><circle class="k" cx="-3" cy="2" r="1"/></g>

<g transform="translate(1399,567)"><rect class="f" x="-11" y="-2" width="7" height="5"/><rect class="f" x="3" y="-10" width="8" height="5"/><rect class="f" x="3" y="-2" width="8" height="5"/><rect class="f" x="3" y="6" width="8" height="5"/><path d="M-4 0H3M-1-7V8M-1-7H3M-1 8H3"/></g>
<g transform="translate(1431,567)"><path class="bl" d="M-10-9H10V5H-3L-7 10V5H-10Z"/></g>
<g transform="translate(1464,567)"><path d="M-7-10H3L8-5V10H-7Z"/><path class="bl" d="M-3-2H3M-3 3H5"/><rect class="f" x="-10" y="-3" width="4" height="4"/></g>
<g transform="translate(1496,567)"><path d="M-6-9H6V-2C6 3 3 5 0 5C-3 5-6 3-6-2ZM-6-7H-10C-10-2-8 0-6 0M6-7H10C10-2 8 0 6 0M0 5V8"/><rect class="f" x="-4" y="8" width="8" height="3"/></g>
<g transform="translate(1528,567)"><path d="M-7-11H3L8-6V11H-7Z"/><rect class="k" x="-4" y="3" width="2.500" height="5"/><rect class="k" x="0" y="0" width="2.500" height="8"/><rect class="k" x="4" y="-3" width="2.500" height="11"/></g>
<g transform="translate(1560,567)"><rect x="-8" y="-9" width="17" height="13"/><path d="M1 3H11L7 7V11H5V7Z" style="fill:#f3f2f1"/><path class="o" d="M-11-11H-4L-7-5H-4L-11 4L-9-2H-12Z"/><path class="bl" d="M-3 0L4-6"/></g>

<g transform="translate(1399,599)"><rect x="-9" y="-9" width="18" height="15"/><path class="bl" d="M-6 3L-1-4L3 2"/><path d="M1 4H11L7 8V11H5V8Z" style="fill:#f3f2f1"/><path class="o" d="M-11-12H-4L-7-6H-4L-11 3L-9-3H-12Z"/></g>
<g transform="translate(1431,599)"><rect x="-9" y="-9" width="18" height="15"/><path d="M-5-3H4M-5 2H1"/><path d="M1 4H11L7 8V11H5V8Z" style="fill:#f3f2f1"/><path class="o" d="M-11-12H-4L-7-6H-4L-11 3L-9-3H-12Z"/></g>
<g transform="translate(1464,599)"><rect x="-11" y="-8" width="22" height="16"/><path class="f" d="M-9 6L-3-2L1 3L5-1L9 6Z"/><circle class="f" cx="4" cy="-4" r="1.500"/></g>
<g transform="translate(1496,599)"><path class="bl" d="M-9-8H10V10H-9Z" style="stroke-width:2"/><path class="bl" d="M-9 3L0-3L4-8"/><circle class="o" cx="-7" cy="-8" r="4.500"/><circle class="o" cx="8" cy="7" r="3.500"/><circle class="o" cx="4" cy="-1" r="1.500"/></g>
<g transform="translate(1528,599)"><path d="M0-11L11 0L0 11L-11 0Z" style="stroke:#a450c8;stroke-width:1.800"/><circle cx="0" cy="-4" r="3.500" style="stroke:#a450c8"/><circle cx="0" cy="4" r="3.500" style="stroke:#a450c8"/><circle cx="-4" cy="0" r="3.500" style="stroke:#a450c8"/><circle cx="4" cy="0" r="3.500" style="stroke:#a450c8"/></g>
<g transform="translate(1560,599)"><path d="M-11-8H3L11 0L3 8H-11L-4 0Z" style="stroke:#3a9fe0;stroke-width:2"/><path d="M-5 5L3-3" style="stroke:#3a9fe0;stroke-width:2"/></g>

<g transform="translate(1399,631)"><rect x="-10" y="-8" width="20" height="15" style="fill:#d8e6f3;stroke:#c8d6e4"/><path d="M-9 4L-3-1L0 2L4-2L9 4Z" style="fill:#3f6ea8;stroke:none"/><rect x="-10" y="4" width="20" height="3" style="fill:#3f78bf;stroke:none"/></g>
<g transform="translate(1431,631)"><rect x="-10" y="-10" width="21" height="21" style="fill:#f7a400;stroke:none"/><path d="M-6-8H6L5 6L0 8L-5 6Z" style="fill:#e04e1c;stroke:none"/></g>
<g transform="translate(1464,631)"><path d="M-9-10H10L8 7L0 11L-8 7Z" style="fill:#e44d26;stroke:none"/></g>
<text x="1431" y="637" font-size="15" font-weight="bold" fill="#fff" text-anchor="middle">5</text>
<text x="1464" y="637" font-size="15" font-weight="bold" fill="#fff" text-anchor="middle">5</text>
<text x="1496" y="634" font-size="11" fill="#a8a8a8" text-anchor="middle">123</text>
<path d="M1487 637h18" style="stroke:#d8d8d8"/>
<path d="M1520.500 629h1.500M1527 629h1.500M1533.500 629h1.500" style="stroke:#555;stroke-width:2.500"/>
</g>

<path d="M1383 650H1576" stroke="#dcdcdc" stroke-dasharray="1.500 2" />
<path d="M1377 662H1583" stroke="#e2e0de"/>
<text class="s" x="1391" y="686.500" textLength="39" lengthAdjust="spacingAndGlyphs">Values</text>
<rect x="1383.500" y="698.500" width="193" height="30" fill="#fff" stroke="#ddd" stroke-dasharray="1.500 2"/>
<text class="s" x="1394" y="717" textLength="122" lengthAdjust="spacingAndGlyphs">Add data fields here</text>
<text class="s" x="1391" y="755" textLength="80" lengthAdjust="spacingAndGlyphs" style="font-size:14px">Drill through</text>
<text class="s" x="1391" y="783" textLength="76" lengthAdjust="spacingAndGlyphs">Cross-report</text>
<rect x="1521.500" y="770" width="36" height="17" rx="8.500" fill="#fff" stroke="#b8b8b8" stroke-width="1.300"/>
<circle cx="1531" cy="778.500" r="4.500" fill="#555"/><text x="1538" y="782.500" font-size="10.500" fill="#aaa">Off</text>
<text class="s" x="1391" y="813" textLength="85" lengthAdjust="spacingAndGlyphs">Keep all filters</text>
<rect x="1521" y="800" width="37" height="18" rx="9" fill="#117865"/>
<circle cx="1548" cy="809" r="4.500" fill="#fff"/><text x="1527" y="813" font-size="10.500" fill="#cfe8e0">On</text>
<rect x="1383.500" y="830.500" width="193" height="29" fill="#fff" stroke="#ddd" stroke-dasharray="1.500 2"/>
<text class="s" x="1391" y="850" textLength="173" lengthAdjust="spacingAndGlyphs">Add drill-through fields here</text>

<rect x="1590" y="321" width="195" height="26" rx="2" fill="#fff"/><path d="M1590 347H1785" stroke="#c6c6c6" stroke-width="1.500"/>
<circle cx="1610" cy="332" r="6.500" fill="none" stroke="#666" stroke-width="1.300"/><path d="M1615 337l4 5" stroke="#666" stroke-width="1.300"/>
<text x="1627" y="340" font-size="14.500" fill="#8a8a8a" textLength="47" lengthAdjust="spacingAndGlyphs">Search</text>
<g fill="none" stroke="#777" stroke-width="1.300"><path d="M1603 366l6 6-6 6M1603 394l6 6-6 6M1603 421l6 6-6 6M1603 448l6 6-6 6M1603 476l6 6-6 6"/></g>
<use href="#tbi" x="1625" y="372"/><use href="#tbi" x="1625" y="400"/><rect x="1626" y="400" width="6" height="9" rx="2" fill="#555"/><use href="#tbi" x="1625" y="427"/><use href="#tbi" x="1625" y="454"/><use href="#tbi" x="1625" y="482"/>
<text class="s" x="1638" y="377" textLength="50" lengthAdjust="spacingAndGlyphs" style="fill:#666">Athletes</text>
<text class="s" x="1638" y="405" textLength="85" lengthAdjust="spacingAndGlyphs" style="fill:#666">CalendarTable</text>
<text class="s" x="1638" y="432" textLength="30" lengthAdjust="spacingAndGlyphs" style="fill:#666">Drills</text>
<text class="s" x="1638" y="459" textLength="80" lengthAdjust="spacingAndGlyphs" style="fill:#666">EntireSession</text>
<text class="s" x="1638" y="487" textLength="73" lengthAdjust="spacingAndGlyphs" style="fill:#666">Metric Table</text>

<!-- tabs -->
<rect x="78" y="1056.500" width="1298" height="41" fill="#f3f2f1"/>
<rect x="32" y="1097" width="1758" height="26" fill="#f3f2f1"/>
<path d="M32 1097.500H1790" stroke="#e3e1df"/>
<polygon points="1791,124 1791,1124 1786.500,1124 1789.500,124" fill="#46474b"/>
<polygon points="30,268 30,1124 34,1124 32,268" fill="#46474b"/>
<rect x="92" y="1064" width="21" height="13" fill="none" stroke="#666" stroke-width="1.500"/><path d="M98 1079.500h9" stroke="#666" stroke-width="2.500"/>
<rect x="90" y="1087" width="27" height="4" rx="2" fill="#117865"/>
<rect x="146.500" y="1061.500" width="14" height="22" rx="2" fill="none" stroke="#666" stroke-width="1.500"/><circle cx="153.500" cy="1081" r=".8" fill="#666"/>
<path d="M190 1072l-3 4 3 4M212 1072l3 4-3 4" fill="none" stroke="#c6c6c6" stroke-width="1.300"/>
<rect x="224" y="1056" width="276" height="36" fill="#fff"/><rect x="224" y="1092" width="276" height="5" fill="#117865"/>
<text x="247" y="1082" font-size="13.500" fill="#555" style="stroke:#555;stroke-width:.2" textLength="229" lengthAdjust="spacingAndGlyphs">Session Report Match Benchmarking</text>
<rect x="500" y="1056" width="45" height="41" fill="#117865"/><path d="M522.500 1070v13M516 1076.500h13" stroke="#fff" stroke-width="3"/>
<text x="36" y="1116" font-size="13.500" fill="#666" textLength="67" lengthAdjust="spacingAndGlyphs">Page 1 of 1</text>
<path d="M1548 1111h4M1558 1111h114M1677 1111h12M1683 1105v12" stroke="#666" stroke-width="1.300"/>
<rect x="1604" y="1105" width="4.500" height="13" fill="#555"/><path d="M1615 1108v6" stroke="#666" stroke-width="1.300"/>
<text x="1703" y="1116" font-size="13.500" fill="#777" textLength="26" lengthAdjust="spacingAndGlyphs">86%</text>
<rect x="1751" y="1104" width="19" height="14" fill="none" stroke="#666" stroke-width="1.500"/><path d="M1754 1108l3-2M1767 1108l-3-2M1754 1114l3 2M1767 1114l-3 2" stroke="#666" stroke-width="1.300"/>
</svg>
</body></html>
